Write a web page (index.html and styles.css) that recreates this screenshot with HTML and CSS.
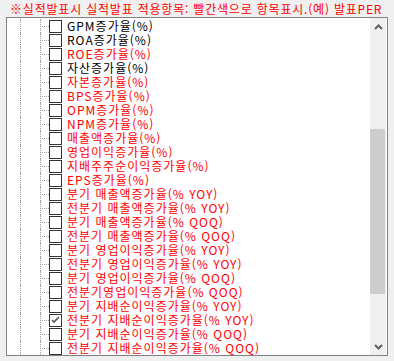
FILE: index.html
```html
<!DOCTYPE html>
<html lang="ko">
<head>
    <meta charset="UTF-8">
    <title>실적발표 항목</title>
    <link rel="stylesheet" href="styles.css">
</head>
<body>
    <div class="notice">※실적발표시 실적발표 적용항목: 빨간색으로 항목표시.(예) 발표PER</div>

    <div class="tree-box">
        <ul class="tree">
            <li class="item"><span class="guide"></span><span class="branch"></span><span class="check"></span><span class="label">GPM증가율(%)</span></li>
            <li class="item"><span class="guide"></span><span class="branch"></span><span class="check"></span><span class="label">ROA증가율(%)</span></li>
            <li class="item red"><span class="guide"></span><span class="branch"></span><span class="check"></span><span class="label">ROE증가율(%)</span></li>
            <li class="item"><span class="guide"></span><span class="branch"></span><span class="check"></span><span class="label">자산증가율(%)</span></li>
            <li class="item red"><span class="guide"></span><span class="branch"></span><span class="check"></span><span class="label">자본증가율(%)</span></li>
            <li class="item red"><span class="guide"></span><span class="branch"></span><span class="check"></span><span class="label">BPS증가율(%)</span></li>
            <li class="item red"><span class="guide"></span><span class="branch"></span><span class="check"></span><span class="label">OPM증가율(%)</span></li>
            <li class="item red"><span class="guide"></span><span class="branch"></span><span class="check"></span><span class="label">NPM증가율(%)</span></li>
            <li class="item red"><span class="guide"></span><span class="branch"></span><span class="check"></span><span class="label">매출액증가율(%)</span></li>
            <li class="item red"><span class="guide"></span><span class="branch"></span><span class="check"></span><span class="label">영업이익증가율(%)</span></li>
            <li class="item red"><span class="guide"></span><span class="branch"></span><span class="check"></span><span class="label">지배주주순이익증가율(%)</span></li>
            <li class="item red"><span class="guide"></span><span class="branch"></span><span class="check"></span><span class="label">EPS증가율(%)</span></li>
            <li class="item red"><span class="guide"></span><span class="branch"></span><span class="check"></span><span class="label">분기 매출액증가율(% YOY)</span></li>
            <li class="item red"><span class="guide"></span><span class="branch"></span><span class="check"></span><span class="label">전분기 매출액증가율(% YOY)</span></li>
            <li class="item red"><span class="guide"></span><span class="branch"></span><span class="check"></span><span class="label">분기 매출액증가율(% QOQ)</span></li>
            <li class="item red"><span class="guide"></span><span class="branch"></span><span class="check"></span><span class="label">전분기 매출액증가율(% QOQ)</span></li>
            <li class="item red"><span class="guide"></span><span class="branch"></span><span class="check"></span><span class="label">분기 영업이익증가율(% YOY)</span></li>
            <li class="item red"><span class="guide"></span><span class="branch"></span><span class="check"></span><span class="label">전분기 영업이익증가율(% YOY)</span></li>
            <li class="item red"><span class="guide"></span><span class="branch"></span><span class="check"></span><span class="label">분기 영업이익증가율(% QOQ)</span></li>
            <li class="item red"><span class="guide"></span><span class="branch"></span><span class="check"></span><span class="label">전분기영업이익증가율(% QOQ)</span></li>
            <li class="item red"><span class="guide"></span><span class="branch"></span><span class="check"></span><span class="label">분기 지배순이익증가율(% YOY)</span></li>
            <li class="item red"><span class="guide"></span><span class="branch"></span><span class="check checked"><svg width="11" height="11" viewBox="0 0 11 11"><polyline points="2,5 4,7 9,2" fill="none" stroke="#555" stroke-width="1.6"/></svg></span><span class="label">전분기 지배순이익증가율(% YOY)</span></li>
            <li class="item red"><span class="guide"></span><span class="branch"></span><span class="check"></span><span class="label">분기 지배순이익증가율(% QOQ)</span></li>
            <li class="item red"><span class="guide"></span><span class="branch"></span><span class="check"></span><span class="label">전분기 지배순이익증가율(% QOQ)</span></li>
        </ul>

        <div class="scrollbar">
            <div class="arrow">
                <svg width="9" height="6" viewBox="0 0 9 6"><polyline points="1,5 4.5,1.5 8,5" fill="none" stroke="#606060" stroke-width="2"/></svg>
            </div>
            <div class="track">
                <div class="thumb"></div>
            </div>
            <div class="arrow">
                <svg width="9" height="6" viewBox="0 0 9 6"><polyline points="1,1 4.5,4.5 8,1" fill="none" stroke="#606060" stroke-width="2"/></svg>
            </div>
        </div>
    </div>
</body>
</html>
```

FILE: styles.css
```css
body {
    margin: 0;
    background-color: #f0f0f0;
    font-family: "Noto Sans CJK KR", "Liberation Sans", sans-serif;
    font-size: 12px;
}
.notice {
    height: 17px;
    line-height: 17px;
    padding-left: 10px;
    color: #ff0000;
    font-size: 12px;
    letter-spacing: 0.8px;
    white-space: nowrap;
    overflow: hidden;
}
.tree-box {
    display: flex;
    width: 380px;
    height: 337px;
    margin-left: 6px;
    border: 1px solid #828282;
    background-color: #fff;
}
.tree {
    flex: 1;
    list-style: none;
    margin: 0;
    padding: 1px 0 0 0;
    overflow: hidden;
}
.item {
    display: flex;
    align-items: center;
    height: 14px;
    line-height: 14px;
    color: #000;
    white-space: nowrap;
}
.item.red {
    color: #ff0000;
}
.guide {
    align-self: stretch;
    width: 19px;
    margin-left: 13px;
    border-left: 1px dotted #a0a0a0;
}
.branch {
    position: relative;
    align-self: stretch;
    width: 8px;
    border-left: 1px dotted #a0a0a0;
}
.branch::after {
    content: "";
    position: absolute;
    left: 1px;
    top: 7px;
    width: 7px;
    border-top: 1px dotted #a0a0a0;
}
.check {
    display: flex;
    align-items: center;
    justify-content: center;
    width: 11px;
    height: 11px;
    border: 1px solid #333;
    background-color: #fff;
}
.label {
    display: block;
    height: 14px;
    margin-left: 5px;
    letter-spacing: 1px;
}
.scrollbar {
    display: flex;
    flex-direction: column;
    width: 16px;
    margin-right: 1px;
    background-color: #f0f0f0;
}
.arrow {
    display: flex;
    align-items: center;
    justify-content: center;
    height: 17px;
}
.track {
    flex: 1;
    padding-top: 94px;
}
.thumb {
    width: 15px;
    height: 165px;
    background-color: #cdcdcd;
}
```
